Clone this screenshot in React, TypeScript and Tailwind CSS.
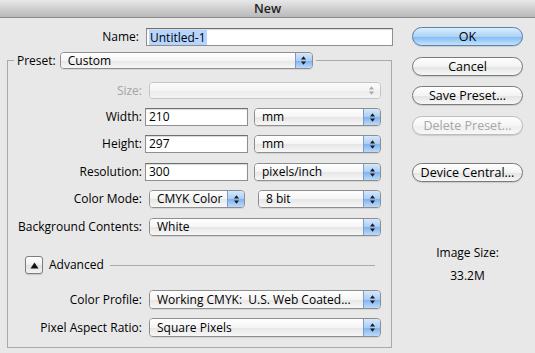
import React from "react";

function Arrows({ disabled }: { disabled?: boolean }) {
  const c = disabled ? "#a8a8a8" : "#1a1a1a";
  return (
    <svg width="7" height="11" viewBox="0 0 7 11">
      <path d="M3.5 1.2 L6 4.4 H1 Z" fill={c} />
      <path d="M3.5 9.8 L6 6.6 H1 Z" fill={c} />
    </svg>
  );
}

function Popup({ value, w, disabled, h = "h-[18px]" }: { value: string; w: string; disabled?: boolean; h?: string }) {
  return (
    <div
      className={`flex ${h} ${w} overflow-hidden rounded-[4px] border ${
        disabled ? "border-[#c4c4c4]" : "border-[#8e8e8e] shadow-[0_1px_0_rgba(0,0,0,0.08)]"
      }`}
    >
      <div
        className={`flex min-w-0 flex-1 items-center pl-[7px] ${
          disabled
            ? "bg-[linear-gradient(to_bottom,#fbfbfb_0%,#f4f4f4_50%,#ececec_51%,#f4f4f4_100%)]"
            : "bg-[linear-gradient(to_bottom,#ffffff_0%,#f5f5f5_50%,#e6e6e6_51%,#f7f7f7_100%)]"
        }`}
      >
        <span className="whitespace-pre leading-[16px]">{value}</span>
      </div>
      <div
        className={`flex w-[17px] shrink-0 items-center justify-center ${
          disabled
            ? "bg-[linear-gradient(to_bottom,#fbfbfb_0%,#f4f4f4_50%,#ececec_51%,#f4f4f4_100%)]"
            : "border-l border-[#7f9cc8] bg-[linear-gradient(to_bottom,#d6e8fb_0%,#a9cdf5_50%,#7db1ee_51%,#bddbfa_100%)]"
        }`}
      >
        <Arrows disabled={disabled} />
      </div>
    </div>
  );
}

function Field({ value, w }: { value: string; w: string }) {
  return (
    <div
      className={`flex h-[18px] ${w} items-center border border-[#8f8f8f] border-t-[#6f6f6f] bg-white pl-[3px] leading-[16px] shadow-[inset_0_1px_1px_rgba(0,0,0,0.15)]`}
    >
      {value}
    </div>
  );
}

function AquaButton({ label, primary, disabled }: { label: string; primary?: boolean; disabled?: boolean }) {
  const cls = primary
    ? "border-[#5b7fae] bg-[linear-gradient(to_bottom,#dcedfd_0%,#acd3f7_50%,#80bbf1_51%,#c4e3fd_100%)] text-[#000]"
    : disabled
    ? "border-[#bdbdbd] bg-[linear-gradient(to_bottom,#fdfdfd_0%,#f6f6f6_50%,#eeeeee_51%,#f8f8f8_100%)] text-[#a6a6a6]"
    : "border-[#7a7a7a] bg-[linear-gradient(to_bottom,#ffffff_0%,#f3f3f3_50%,#e3e3e3_51%,#f7f7f7_100%)] text-[#000]";
  return (
    <div
      className={`flex h-[19px] w-[111px] items-center justify-center rounded-full border text-[12.5px] leading-[16px] ${cls} shadow-[0_1px_1px_rgba(0,0,0,0.12)]`}
    >
      {label}
    </div>
  );
}

function Row({ label, children, mt, disabled }: { label: string; children: React.ReactNode; mt: string; disabled?: boolean }) {
  return (
    <div className={`flex items-center ${mt}`}>
      <div className={`w-[128px] shrink-0 text-right ${disabled ? "text-[#a4a4a4]" : ""}`}>{label}</div>
      {children}
    </div>
  );
}

export default function App() {
  return (
    <div className="h-[353px] w-[535px] overflow-hidden bg-[#e8e8e8] font-['Open_Sans','DejaVu_Sans',sans-serif] text-[12px] leading-[16px] text-[#000]">
      <div className="flex h-[18px] items-center justify-center border-b border-[#8a8a8a] bg-[linear-gradient(to_bottom,#e8e8e8_0%,#d0d0d0_50%,#b9b9b9_100%)] text-[12.5px] font-semibold text-[#222]">
        New
      </div>
      <div className="flex">
        <div className="w-[412px] shrink-0">
          <div className="mt-[10px] flex items-center">
            <div className="w-[139px] shrink-0 text-right">Name:</div>
            <div className="ml-[7px] flex h-[18px] w-[247px] items-center border border-[#8f8f8f] border-t-[#6f6f6f] bg-white pl-[2px] shadow-[inset_0_1px_1px_rgba(0,0,0,0.15)]">
              <span className="bg-[#b5d5ff] px-[1px] leading-[15px]">Untitled-1</span>
            </div>
          </div>
          <fieldset className="ml-[7px] mt-[6px] w-[385px] border border-[#a9a9a9] pb-[10px] pl-[6px]">
            <legend className="flex items-center px-[3px]">
              <span>Preset:</span>
              <div className="ml-[4px]">
                <Popup value="Custom" w="w-[253px]" h="h-[17px]" />
              </div>
            </legend>
            <Row label="Size:" mt="mt-[13px]" disabled>
              <div className="ml-[7px]">
                <Popup value="" w="w-[232px]" h="h-[17px]" disabled />
              </div>
            </Row>
            <Row label="Width:" mt="mt-[9px]">
              <div className="ml-[3px]">
                <Field value="210" w="w-[103px]" />
              </div>
              <div className="ml-[6px]">
                <Popup value="mm" w="w-[127px]" />
              </div>
            </Row>
            <Row label="Height:" mt="mt-[9px]">
              <div className="ml-[3px]">
                <Field value="297" w="w-[103px]" />
              </div>
              <div className="ml-[6px]">
                <Popup value="mm" w="w-[127px]" />
              </div>
            </Row>
            <Row label="Resolution:" mt="mt-[10px]">
              <div className="ml-[3px]">
                <Field value="300" w="w-[103px]" />
              </div>
              <div className="ml-[6px]">
                <Popup value="pixels/inch" w="w-[127px]" />
              </div>
            </Row>
            <Row label="Color Mode:" mt="mt-[9px]">
              <div className="ml-[7px]">
                <Popup value="CMYK Color" w="w-[96px]" />
              </div>
              <div className="ml-[13px]">
                <Popup value="8 bit" w="w-[123px]" />
              </div>
            </Row>
            <Row label="Background Contents:" mt="mt-[10px]">
              <div className="ml-[7px]">
                <Popup value="White" w="w-[232px]" />
              </div>
            </Row>
            <div className="mt-[20px] flex h-[18px] items-center">
              <div className="ml-[11px] flex h-[18px] w-[18px] items-center justify-center rounded-[3px] border border-[#7d7d7d] bg-[linear-gradient(to_bottom,#ffffff_0%,#efefef_50%,#e0e0e0_51%,#f4f4f4_100%)] shadow-[0_1px_1px_rgba(0,0,0,0.15)]">
                <svg width="9" height="7" viewBox="0 0 9 7">
                  <path d="M4.5 0.5 L8.5 6.5 H0.5 Z" fill="#111" />
                </svg>
              </div>
              <span className="ml-[6px]">Advanced</span>
              <div className="ml-[6px] mr-[16px] h-px flex-1 bg-[#a9a9a9]" />
            </div>
            <Row label="Color Profile:" mt="mt-[16px]">
              <div className="ml-[7px]">
                <Popup value="Working CMYK:  U.S. Web Coated..." w="w-[232px]" h="h-[19px]" />
              </div>
            </Row>
            <Row label="Pixel Aspect Ratio:" mt="mt-[9px]">
              <div className="ml-[7px]">
                <Popup value="Square Pixels" w="w-[232px]" h="h-[19px]" />
              </div>
            </Row>
          </fieldset>
        </div>
        <div className="flex w-[111px] shrink-0 flex-col">
          <div className="mt-[9px]">
            <AquaButton label="OK" primary />
          </div>
          <div className="mt-[11px]">
            <AquaButton label="Cancel" />
          </div>
          <div className="mt-[10px]">
            <AquaButton label="Save Preset..." />
          </div>
          <div className="mt-[11px]">
            <AquaButton label="Delete Preset..." disabled />
          </div>
          <div className="mt-[28px]">
            <AquaButton label="Device Central..." />
          </div>
          <div className="mt-[63px] text-center">Image Size:</div>
          <div className="mt-[7px] text-center">33.2M</div>
        </div>
      </div>
    </div>
  );
}
